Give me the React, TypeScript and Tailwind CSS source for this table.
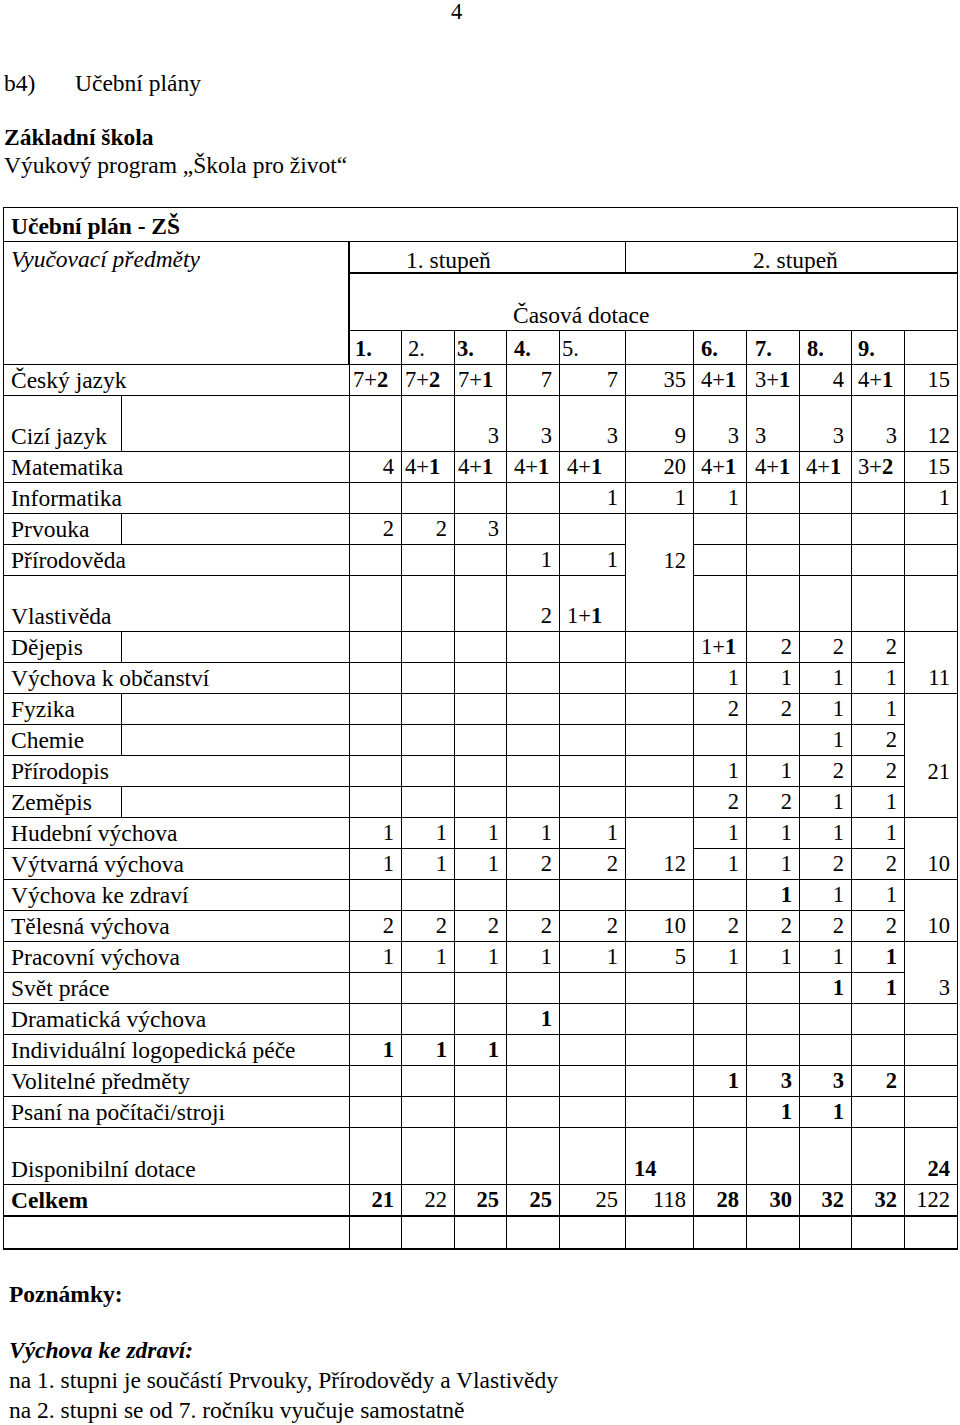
import React from 'react';

const LPAD = ['pl-[3px]', 'pl-[3px]', 'pl-[3px]', 'pl-[7px]', 'pl-[7px]', 'pl-[8px]', 'pl-[7px]', 'pl-[8px]', 'pl-[6px]', 'pl-[6px]', 'pl-[6px]'];

type Row = {
  l: string;
  split?: boolean;
  v: string[];
  nb?: number[];
  h?: string;
  lb?: boolean;
  bb?: boolean;
};

const E = ['', '', '', '', '', '', '', '', '', '', ''];

const rows: Row[] = [
  { l: 'Český jazyk', v: ['7+2', '7+2', '7+1', '7', '7', '35', '4+1', '3+1', '4', '4+1', '15'] },
  { l: 'Cizí jazyk', split: true, h: 'h-[56px]', v: ['', '', '3', '3', '3', '9', '3', '<3', '3', '3', '12'] },
  { l: 'Matematika', v: ['4', '4+1', '4+1', '4+1', '4+1', '20', '4+1', '4+1', '4+1', '3+2', '15'] },
  { l: 'Informatika', v: ['', '', '', '', '1', '1', '1', '', '', '', '1'] },
  { l: 'Prvouka', split: true, v: ['2', '2', '3', '', '', '', '', '', '', '', ''], nb: [5] },
  { l: 'Přírodověda', v: ['', '', '', '1', '1', '12', '', '', '', '', ''], nb: [5] },
  { l: 'Vlastivěda', h: 'h-[56px]', v: ['', '', '', '2', '1+1', '', '', '', '', '', ''] },
  { l: 'Dějepis', split: true, v: ['', '', '', '', '', '', '1+1', '2', '2', '2', ''], nb: [10] },
  { l: 'Výchova k občanství', v: ['', '', '', '', '', '', '1', '1', '1', '1', '11'] },
  { l: 'Fyzika', split: true, v: ['', '', '', '', '', '', '2', '2', '1', '1', ''], nb: [10] },
  { l: 'Chemie', split: true, v: ['', '', '', '', '', '', '', '', '1', '2', ''], nb: [10] },
  { l: 'Přírodopis', v: ['', '', '', '', '', '', '1', '1', '2', '2', '21'], nb: [10] },
  { l: 'Zeměpis', split: true, v: ['', '', '', '', '', '', '2', '2', '1', '1', ''] },
  { l: 'Hudební výchova', v: ['1', '1', '1', '1', '1', '', '1', '1', '1', '1', ''], nb: [5, 10] },
  { l: 'Výtvarná výchova', v: ['1', '1', '1', '2', '2', '12', '1', '1', '2', '2', '10'] },
  { l: 'Výchova ke zdraví', v: ['', '', '', '', '', '', '', '!1', '1', '1', ''], nb: [10] },
  { l: 'Tělesná výchova', v: ['2', '2', '2', '2', '2', '10', '2', '2', '2', '2', '10'] },
  { l: 'Pracovní výchova', v: ['1', '1', '1', '1', '1', '5', '1', '1', '1', '!1', ''], nb: [10] },
  { l: 'Svět práce', v: ['', '', '', '', '', '', '', '', '!1', '!1', '3'] },
  { l: 'Dramatická výchova', v: ['', '', '', '!1', '', '', '', '', '', '', ''] },
  { l: 'Individuální logopedická péče', v: ['!1', '!1', '!1', '', '', '', '', '', '', '', ''] },
  { l: 'Volitelné předměty', v: ['', '', '', '', '', '', '!1', '!3', '!3', '!2', ''] },
  { l: 'Psaní na počítači/stroji', v: ['', '', '', '', '', '', '', '!1', '!1', '', ''] },
  { l: 'Disponibilní dotace', h: 'h-[57px]', v: ['', '', '', '', '', '!<14', '', '', '', '', '!24'] },
  { l: 'Celkem', lb: true, bb: true, h: 'h-[32px]', v: ['!21', '22', '!25', '!25', '25', '118', '!28', '!30', '!32', '!32', '122'] },
  { l: '', bb: true, h: 'h-[33px]', v: E },
];

function parse(v: string) {
  let s = v;
  let bold = false;
  let left = false;
  while (s.startsWith('!') || s.startsWith('<')) {
    if (s[0] === '!') bold = true;
    else left = true;
    s = s.slice(1);
  }
  if (s.includes('+')) left = true;
  return { s, bold, left };
}

function Val({ s, bold }: { s: string; bold: boolean }) {
  if (s.includes('+')) {
    const [a, b] = s.split('+');
    return (
      <>
        {a}+<span className="font-bold">{b}</span>
      </>
    );
  }
  return bold ? <span className="font-bold">{s}</span> : <>{s}</>;
}

function BodyRow({ r }: { r: Row }) {
  const h = r.h ?? 'h-[31px]';
  const bottom = r.bb ? 'border-b-2' : 'border-b';
  const label = (
    <span className={`whitespace-nowrap text-[23.5px] leading-[30px] ${r.lb ? 'font-bold' : ''}`}>{r.l}</span>
  );
  return (
    <>
      {r.split ? (
        <>
          <div className={`${h} ${bottom} flex items-end border-r border-black pl-[7px]`}>{label}</div>
          <div className={`${h} ${bottom} border-r border-black`} />
        </>
      ) : (
        <div className={`${h} ${bottom} col-span-2 flex items-end border-r border-black pl-[7px]`}>{label}</div>
      )}
      {r.v.map((v, i) => {
        const p = parse(v);
        const noB = r.nb?.includes(i);
        return (
          <div
            key={i}
            className={`${h} ${noB ? '' : bottom} flex items-end border-r border-black ${
              p.left ? 'justify-start ' + LPAD[i] : 'justify-end pr-[7px]'
            }`}
          >
            <span className="whitespace-nowrap text-[22.5px] leading-[30px]">
              <Val s={p.s} bold={p.bold} />
            </span>
          </div>
        );
      })}
    </>
  );
}

const GRADES: { t: string; b: boolean; pl: string }[] = [
  { t: '1.', b: true, pl: 'pl-[5px]' },
  { t: '2.', b: false, pl: 'pl-[6px]' },
  { t: '3.', b: true, pl: 'pl-[2px]' },
  { t: '4.', b: true, pl: 'pl-[7px]' },
  { t: '5.', b: false, pl: 'pl-[2px]' },
  { t: '', b: false, pl: 'pl-[7px]' },
  { t: '6.', b: true, pl: 'pl-[7px]' },
  { t: '7.', b: true, pl: 'pl-[8px]' },
  { t: '8.', b: true, pl: 'pl-[7px]' },
  { t: '9.', b: true, pl: 'pl-[6px]' },
  { t: '', b: false, pl: 'pl-[7px]' },
];

export default function App() {
  return (
    <div className="w-[960px] bg-white text-black font-['Liberation_Serif','Times_New_Roman',serif]">
      <div className="h-[24px] pl-[451px] text-[22.5px] leading-[24px]">4</div>
      <div className="mt-[45px] flex pl-[4px] text-[23.5px] leading-[28px]">
        <span className="w-[71px]">b4)</span>
        <span>Učební plány</span>
      </div>
      <div className="mt-[26px] pl-[4px] text-[23.5px] font-bold leading-[28px]">Základní škola</div>
      <div className="pl-[4px] text-[23.5px] leading-[28px]">Výukový program „Škola pro život“</div>

      <div className="ml-[3px] mt-[28px] grid w-[955px] grid-cols-[118px_228px_52px_53px_52px_53px_66px_68px_53px_53px_52px_53px_53px] border-l border-t border-black">
        <div className="col-span-13 flex h-[34px] items-end border-r border-b border-black pl-[7px]">
          <span className="text-[23.5px] font-bold leading-[30px]">Učební plán - ZŠ</span>
        </div>

        <div className="col-span-2 flex h-[32px] items-end border-r-2 border-black pl-[7px]">
          <span className="text-[23.5px] italic leading-[30px]">Vyučovací předměty</span>
        </div>
        <div className="col-span-5 flex h-[32px] items-end border-r border-b-2 border-black pl-[56px]">
          <span className="text-[23.5px] leading-[24px]">1. stupeň</span>
        </div>
        <div className="col-span-6 flex h-[32px] items-end border-r border-b-2 border-black pl-[127px]">
          <span className="text-[23.5px] leading-[24px]">2. stupeň</span>
        </div>

        <div className="col-span-2 h-[57px] border-r-2 border-black" />
        <div className="col-span-11 flex h-[57px] items-end border-r border-b border-black pl-[163px]">
          <span className="text-[23.5px] leading-[30px]">Časová dotace</span>
        </div>

        <div className="col-span-2 h-[34px] border-r-2 border-b border-black" />
        {GRADES.map((g, i) => (
          <div key={i} className={`flex h-[34px] items-end border-r border-b border-black ${g.pl}`}>
            <span className={`text-[22.5px] leading-[30px] ${g.b ? 'font-bold' : ''}`}>{g.t}</span>
          </div>
        ))}

        {rows.map((r, i) => (
          <BodyRow key={i} r={r} />
        ))}
      </div>

      <div className="mt-[29px] pl-[9px] text-[23.5px] font-bold leading-[30px]">Poznámky:</div>
      <div className="mt-[26px] pl-[9px] text-[23.5px] font-bold italic leading-[30px]">Výchova ke zdraví:</div>
      <div className="pl-[9px] text-[23.5px] leading-[30px]">na 1. stupni je součástí Prvouky, Přírodovědy a Vlastivědy</div>
      <div className="pl-[9px] text-[23.5px] leading-[30px]">na 2. stupni se od 7. ročníku vyučuje samostatně</div>
    </div>
  );
}
